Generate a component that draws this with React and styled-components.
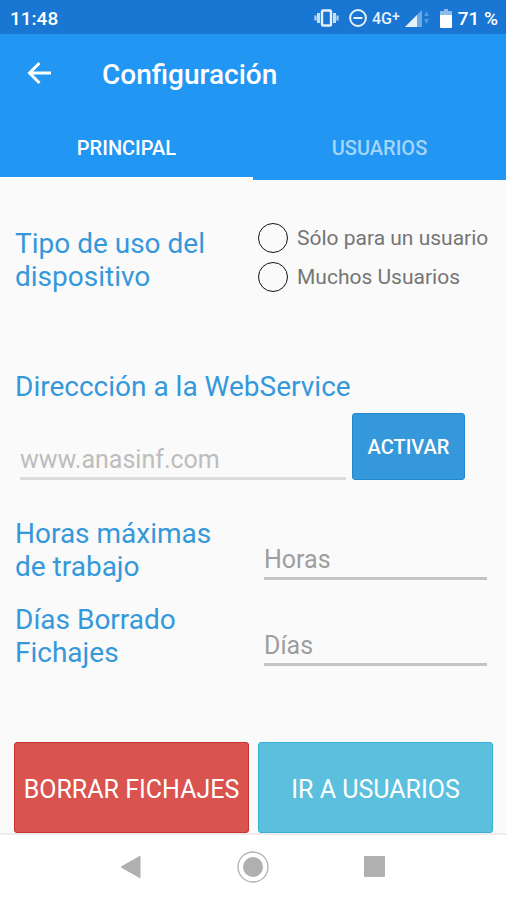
import React, { useState } from 'react';
import styled, { createGlobalStyle } from 'styled-components';

const App = () => {
  const [tab, setTab] = useState('principal');
  const [uso, setUso] = useState('');

  return (
    <>
      <GlobalStyle />
      <Screen>
        <StatusBar>
          <span>11:48</span>
          <StatusIcons>
            <VibrateIcon />
            <Network>
              <DoNotDisturbIcon />
              <NetworkType>4G<sup>+</sup></NetworkType>
              <SignalIcon />
            </Network>
            <Battery>
              <BatteryIcon />
              <span>71 %</span>
            </Battery>
          </StatusIcons>
        </StatusBar>

        <AppBar>
          <BackButton type="button" aria-label="Atrás">
            <svg width="24" height="24" viewBox="0 0 24 24" fill="none" stroke="#fff" strokeWidth="3">
              <path d="M24 11H2.500M12.500 1L2.500 11l10 10" />
            </svg>
          </BackButton>
          <Title>Configuración</Title>
        </AppBar>
        <Tabs role="tablist">
          <Tab type="button" role="tab" $active={tab === 'principal'} onClick={() => setTab('principal')}>PRINCIPAL</Tab>
          <Tab type="button" role="tab" $active={tab === 'usuarios'} onClick={() => setTab('usuarios')}>USUARIOS</Tab>
        </Tabs>

        <Content>
          <UsageRow as="fieldset">
            <Label as="legend">Tipo de uso del dispositivo</Label>
            <RadioGroup>
              <RadioLabel>
                <Radio type="radio" name="uso" checked={uso === 'uno'} onChange={() => setUso('uno')} />
                Sólo para un usuario
              </RadioLabel>
              <RadioLabel>
                <Radio type="radio" name="uso" checked={uso === 'muchos'} onChange={() => setUso('muchos')} />
                Muchos Usuarios
              </RadioLabel>
            </RadioGroup>
          </UsageRow>

          <WebService>
            <Label htmlFor="webservice">Direccción a la WebService</Label>
            <WebServiceRow>
              <TextField id="webservice" type="text" placeholder="www.anasinf.com" $light />
              <ActivateButton type="button">ACTIVAR</ActivateButton>
            </WebServiceRow>
          </WebService>

          <Fields>
            <FieldRow>
              <Label htmlFor="horas">Horas máximas de trabajo</Label>
              <TextField id="horas" type="text" placeholder="Horas" />
            </FieldRow>
            <FieldRow>
              <Label htmlFor="dias">Días Borrado Fichajes</Label>
              <TextField id="dias" type="text" placeholder="Días" />
            </FieldRow>
          </Fields>

          <Actions>
            <ActionButton type="button" $color="#d9534f" $border="#cb2f2f">BORRAR FICHAJES</ActionButton>
            <ActionButton type="button" $color="#5bc0de" $border="#33b0d3">IR A USUARIOS</ActionButton>
          </Actions>
        </Content>

        <NavBar>
          <NavButton type="button" aria-label="Volver">
            <svg width="24" height="24" viewBox="0 0 24 24">
              <path d="M2.500 11.200L20.500 1q1-.5 1 .6v20.800q0 1.100-1 .6L2.500 12.800q-1.200-.8 0-1.600z" fill="#b0b0b0" />
            </svg>
          </NavButton>
          <NavButton type="button" aria-label="Inicio">
            <svg width="34" height="34" viewBox="0 0 34 34">
              <circle cx="17" cy="17" r="15" fill="none" stroke="#b0b0b0" strokeWidth="1.300" />
              <circle cx="17" cy="17" r="10" fill="#b0b0b0" />
            </svg>
          </NavButton>
          <NavButton type="button" aria-label="Recientes">
            <svg width="24" height="24" viewBox="0 0 24 24">
              <rect x="1" y="1" width="21" height="21" rx="1" fill="#b0b0b0" />
            </svg>
          </NavButton>
        </NavBar>
      </Screen>
    </>
  );
};

const VibrateIcon = () => (
  <svg width="25" height="18" viewBox="0 0 25 18">
    <rect x="8" y="1.500" width="9" height="15" rx="1" fill="none" stroke="#e6f1fc" strokeWidth="2.400" />
    <path d="M4.500 4v10M20.500 4v10" stroke="#c5def7" strokeWidth="3" />
    <path d="M1.500 6.500v5M23.500 6.500v5" stroke="#a9cdf1" strokeWidth="2.400" />
  </svg>
);

const DoNotDisturbIcon = () => (
  <svg width="18" height="18" viewBox="0 0 18 18" fill="none" stroke="#e6f1fc" strokeWidth="2">
    <circle cx="9" cy="9" r="7.900" />
    <path d="M4.500 9h9" />
  </svg>
);

const SignalIcon = () => (
  <svg width="25" height="18" viewBox="0 0 25 18">
    <path d="M0 18L17 1v17z" fill="#6da9e4" />
    <path d="M0 18L12 6v12z" fill="#e6f1fc" />
    <path d="M19 7l2.500-5L24 7zM19 10l2.500 5L24 10z" fill="#5499dd" />
  </svg>
);

const BatteryIcon = () => (
  <svg width="12" height="19" viewBox="0 0 12 19">
    <path d="M4 0h4v2h3q1 0 1 1v3H0V3q0-1 1-1h3z" fill="#8bbbea" />
    <path d="M0 6h12v12q0 1-1 1H1q-1 0-1-1z" fill="#fff" />
  </svg>
);

export default App;

const GlobalStyle = createGlobalStyle`
  * {
    box-sizing: border-box;
  }

  body {
    margin: 0;
    background-color: #fafafa;
    font-family: Roboto, 'Liberation Sans', sans-serif;
  }

  button, input {
    font-family: inherit;
  }
`;

const Screen = styled.div`
  min-height: 100vh;
  display: flex;
  flex-direction: column;
`;

const StatusBar = styled.div`
  height: 34px;
  padding: 2px 8px 0 10px;
  display: flex;
  justify-content: space-between;
  align-items: center;
  background-color: #1976d2;
  color: #fff;
  font-size: 19px;
  font-weight: 500;
`;

const StatusIcons = styled.div`
  display: flex;
  align-items: center;
  gap: 10px;
`;

const Network = styled.div`
  display: flex;
  align-items: center;
  gap: 5px;
`;

const Battery = styled.div`
  display: flex;
  align-items: center;
  gap: 6px;
`;

const NetworkType = styled.span`
  display: flex;
  align-items: center;
  color: #e6f1fc;
  font-size: 16px;

  sup {
    font-size: 14px;
    line-height: 14px;
    align-self: flex-start;
  }
`;

const AppBar = styled.header`
  height: 80px;
  padding: 0 20px;
  display: flex;
  align-items: center;
  gap: 44px;
  background-color: #2196f3;
`;

const BackButton = styled.button`
  width: 38px;
  height: 40px;
  padding: 0;
  display: flex;
  align-items: center;
  justify-content: center;
  border: none;
  background: none;
  cursor: pointer;
`;

const Title = styled.h1`
  margin: 0;
  color: #fff;
  font-size: 28px;
  font-weight: 500;
`;

const Tabs = styled.div`
  height: 66px;
  display: grid;
  grid-template-columns: 1fr 1fr;
  background-color: #2196f3;
`;

const Tab = styled.button`
  padding: 4px 0 0;
  border: none;
  border-bottom: 3px solid ${({ $active }) => ($active ? '#fff' : 'transparent')};
  background: none;
  color: ${({ $active }) => ($active ? '#fff' : '#a6d5fa')};
  font-size: 20px;
  font-weight: 500;
  cursor: pointer;
`;

const Content = styled.main`
  flex: 1;
  padding: 38px 13px 0 14px;
  display: flex;
  flex-direction: column;
`;

const Columns = styled.div`
  display: grid;
  grid-template-columns: repeat(2, minmax(0, 1fr));
  column-gap: 9px;
  align-items: end;
`;

const UsageRow = styled(Columns)`
  margin: 0;
  padding: 0;
  border: none;

  legend {
    margin-bottom: 3px;
  }
`;

const FieldRow = styled(Columns)`
  input {
    margin-bottom: 3px;
  }
`;

const Label = styled.label`
  float: left; /* a legend only joins the grid when floated */
  padding: 0 16px 0 1px;
  color: #3498db;
  font-size: 28px;
  line-height: 33px;
`;

const RadioGroup = styled.div`
  display: flex;
  flex-direction: column;
`;

const RadioLabel = styled.label`
  height: 39px;
  display: flex;
  align-items: center;
  gap: 9px;
  color: #757575;
  font-size: 21px;
  white-space: nowrap;
`;

const Radio = styled.input`
  appearance: none;
  flex: none;
  width: 30px;
  height: 30px;
  margin: 0;
  border: 1px solid #111;
  border-radius: 50%;

  &:checked {
    background: radial-gradient(#3498db 8px, transparent 9px);
  }
`;

const WebService = styled.div`
  margin-top: 74px;
  display: flex;
  flex-direction: column;
`;

const WebServiceRow = styled.div`
  margin: 10px 28px 0 0;
  display: flex;
  align-items: flex-end;
`;

const TextField = styled.input`
  flex: 1;
  min-width: 0;
  height: 38px;
  margin: 0 6px;
  padding: 0;
  border: none;
  border-bottom: 3px solid ${({ $light }) => ($light ? '#dcdcdc' : '#c4c4c4')};
  border-radius: 0;
  outline: none;
  background: none;
  color: #333;
  font-size: 25px;

  &::placeholder {
    color: ${({ $light }) => ($light ? '#bdbdbd' : '#9e9e9e')};
    opacity: 1;
  }
`;

const ActivateButton = styled.button`
  width: 113px;
  height: 67px;
  padding: 0;
  border: 1px solid #2088d0;
  border-radius: 3px;
  background-color: #3498db;
  color: #fff;
  font-size: 20px;
  font-weight: 500;
  cursor: pointer;
`;

const Fields = styled.div`
  margin-top: 37px;
  display: flex;
  flex-direction: column;
  gap: 20px;
`;

const Actions = styled.div`
  margin-top: auto;
  padding-top: 20px;
  display: grid;
  grid-template-columns: 1fr 1fr;
  column-gap: 9px;
`;

const ActionButton = styled.button`
  height: 91px;
  padding: 3px 0 0;
  border: 1px solid ${({ $border }) => $border};
  border-radius: 3px;
  background-color: ${({ $color }) => $color};
  color: #fff;
  font-size: 25px;
  white-space: nowrap;
  cursor: pointer;
`;

const NavBar = styled.nav`
  height: 67px;
  padding: 0 70px 2px;
  display: grid;
  grid-template-columns: repeat(3, 1fr);
  border-top: 2px solid #ececec;
  background-color: #fff;
`;

const NavButton = styled.button`
  padding: 0;
  display: flex;
  align-items: center;
  justify-content: center;
  border: none;
  background: none;
  cursor: pointer;
`;
